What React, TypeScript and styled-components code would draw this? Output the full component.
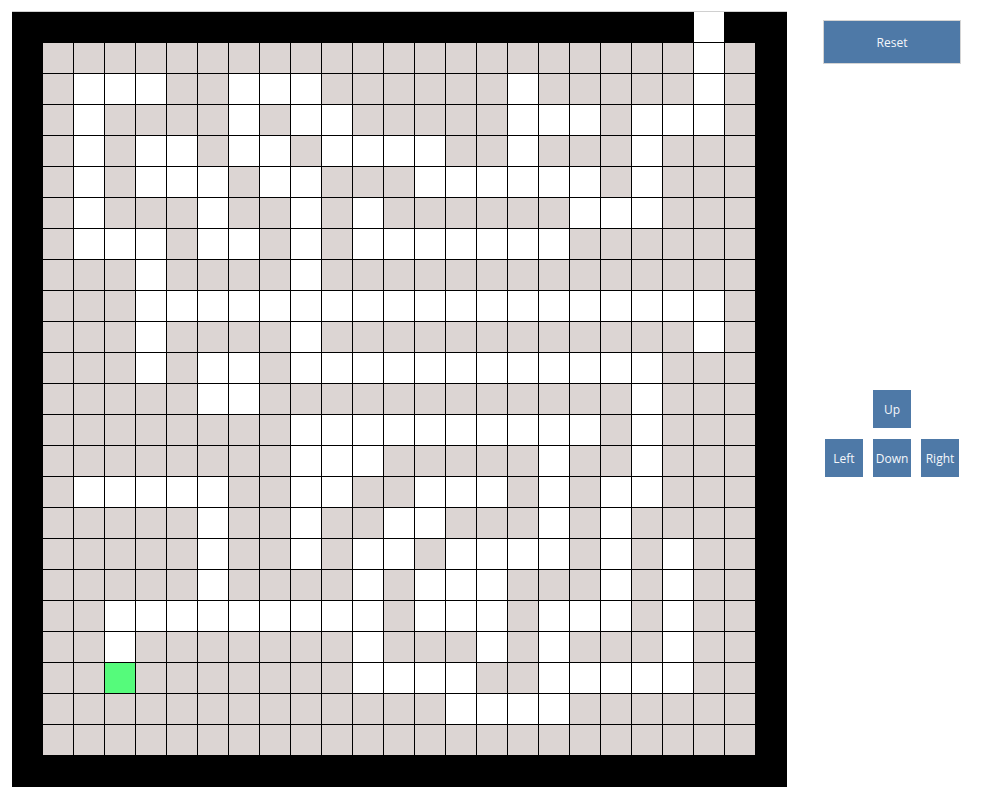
import React, { useState } from "react"
import styled, { createGlobalStyle } from "styled-components"

const GlobalStyle = createGlobalStyle`
  html, body {
    margin: 0;
    padding: 0;
    background: #ffffff;
  }
  body {
    font-family: "Open Sans", "Liberation Sans", sans-serif;
  }
`

// inner 23x23 of the maze, G = wall, W = path, P = player start
const INNER = [
  "GGGGGGGGGGGGGGGGGGGGGWG",
  "GWWWGGWWWGGGGGGWGGGGGWG",
  "GWGGGGWGWWGGGGGWWWGWWWG",
  "GWGWWGWWGWWWWGGWGGGWGGG",
  "GWGWWWGWWGGGWWWWWWGWGGG",
  "GWGGGWGGWGWGGGGGGWWWGGG",
  "GWWWGWWGWGWWWWWWWGGGGGG",
  "GGGWGGGGWGGGGGGGGGGGGGG",
  "GGG" + "W".repeat(19) + "G",
  "GGGWGGGGWGGGGGGGGGGGGWG",
  "GGGWGWWG" + "W".repeat(12) + "GGG",
  "GGGGGWW" + "G".repeat(12) + "WGGG",
  "G".repeat(8) + "W".repeat(10) + "GWGGG",
  "G".repeat(8) + "WWWGGGGGWGGWGGG",
  "GWWWWWGGWWGGWWWGWGWWGGG",
  "GGGGGWGGWGGWWGGGWGWGGGG",
  "GGGGGWGGWGWWGWWWWGWGWGG",
  "GGGGGWGGGGWGWWWGGGWGWGG",
  "GG" + "W".repeat(9) + "GWWWGWWWGWGG",
  "GGW" + "G".repeat(7) + "WGGGWGWGGGWGG",
  "GGP" + "G".repeat(7) + "WWWWGGWWWWWGG",
  "G".repeat(13) + "WWWW" + "G".repeat(6),
  "G".repeat(23),
]

const SIZE = 25
const EXIT_COL = 22

type Kind = "border" | "wall" | "path" | "player"

const buildGrid = (): Kind[][] => {
  const grid: Kind[][] = []
  for (let r = 0; r < SIZE; r++) {
    const row: Kind[] = []
    for (let c = 0; c < SIZE; c++) {
      if (r === 0 && c === EXIT_COL) {
        row.push("path")
      } else if (r === 0 || c === 0 || r === SIZE - 1 || c === SIZE - 1) {
        row.push("border")
      } else {
        const ch = INNER[r - 1][c - 1]
        row.push(ch === "W" || ch === "P" ? "path" : "wall")
      }
    }
    grid.push(row)
  }
  return grid
}

const START = { r: 21, c: 3 }
const GRID = buildGrid()

const Page = styled.div`
  display: flex;
  align-items: flex-start;
  padding: 12px;
  gap: 13px;
`

const Board = styled.div`
  display: grid;
  grid-template-columns: repeat(25, 30px);
  grid-auto-rows: 30px;
  gap: 1px;
  padding: 0 1px 1px 0;
  background: #000000;
  border-top: 1px solid #d0d0d0;
  margin-top: -1px;
`

const cellColors: Record<Kind, string> = {
  border: "#000000",
  wall: "#dcd5d3",
  path: "#ffffff",
  player: "#55fb7b",
}

const Cell = styled.div<{ $kind: Kind }>`
  background: ${(p) => cellColors[p.$kind]};
`

const Side = styled.div`
  width: 184px;
  display: flex;
  flex-direction: column;
  align-items: center;
  padding-top: 8px;
`

const ResetButton = styled.button`
  width: 138px;
  height: 44px;
  background: #4e79a7;
  border: 1px solid #d4d4d4;
  color: #f4f7fb;
  font-family: "Open Sans", "Liberation Sans", sans-serif;
  font-size: 12px;
  padding: 0;
  cursor: pointer;
`

const Controls = styled.div`
  margin-top: 326px;
  display: grid;
  grid-template-columns: repeat(3, 38px);
  grid-auto-rows: 38px;
  column-gap: 10px;
  row-gap: 11px;
`

const ArrowButton = styled.button<{ $col: number; $row: number }>`
  grid-column: ${(p) => p.$col};
  grid-row: ${(p) => p.$row};
  background: #4e79a7;
  border: none;
  color: #f4f7fb;
  font-family: "Open Sans", "Liberation Sans", sans-serif;
  font-size: 12px;
  padding: 0;
  cursor: pointer;
`

export default function App() {
  const [pos, setPos] = useState(START)

  const move = (dr: number, dc: number) => {
    const r = pos.r + dr
    const c = pos.c + dc
    if (r < 0 || c < 0 || r >= SIZE || c >= SIZE) return
    if (GRID[r][c] !== "path") return
    setPos({ r, c })
  }

  return (
    <>
      <GlobalStyle />
      <Page>
        <Board>
          {GRID.map((row, r) =>
            row.map((kind, c) => (
              <Cell
                key={`${r}-${c}`}
                $kind={r === pos.r && c === pos.c ? "player" : kind}
              />
            ))
          )}
        </Board>
        <Side>
          <ResetButton onClick={() => setPos(START)}>Reset</ResetButton>
          <Controls>
            <ArrowButton $col={2} $row={1} onClick={() => move(-1, 0)}>Up</ArrowButton>
            <ArrowButton $col={1} $row={2} onClick={() => move(0, -1)}>Left</ArrowButton>
            <ArrowButton $col={2} $row={2} onClick={() => move(1, 0)}>Down</ArrowButton>
            <ArrowButton $col={3} $row={2} onClick={() => move(0, 1)}>Right</ArrowButton>
          </Controls>
        </Side>
      </Page>
    </>
  )
}
